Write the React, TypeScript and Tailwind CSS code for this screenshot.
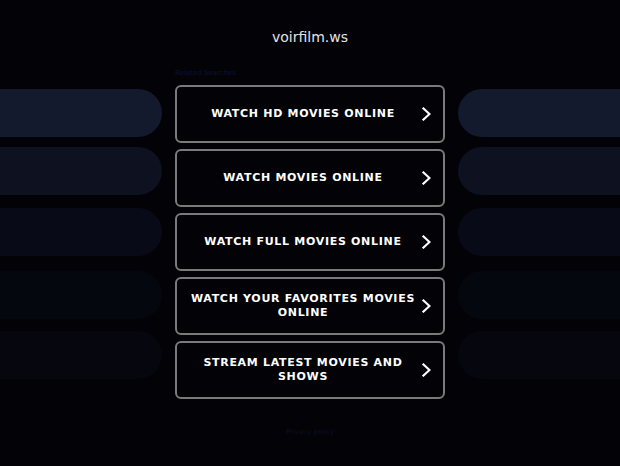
import React from "react";

const links = [
  "WATCH HD MOVIES ONLINE",
  "WATCH MOVIES ONLINE",
  "WATCH FULL MOVIES ONLINE",
  "WATCH YOUR FAVORITES MOVIES ONLINE",
  "STREAM LATEST MOVIES AND SHOWS",
];

const bars = [
  { bg: "bg-[#131a2d]", mt: "mt-0" },
  { bg: "bg-[#0d1120]", mt: "mt-[10px]" },
  { bg: "bg-[#080b17]", mt: "mt-[13px]" },
  { bg: "bg-[#05070f]", mt: "mt-[15px]" },
  { bg: "bg-[#05060e]", mt: "mt-[12px]" },
];

function Chevron() {
  return (
    <svg width="10" height="14" viewBox="0 0 10 14" fill="none" className="shrink-0">
      <path d="M2.5 1.5 L8.5 7 L2.5 12.5" stroke="#ffffff" strokeWidth="2.2" strokeLinecap="square" />
    </svg>
  );
}

export default function App() {
  return (
    <div
      className="w-[620px] h-[466px] bg-[#030307] overflow-hidden flex flex-col"
      style={{ fontFamily: '"DejaVu Sans", Verdana, sans-serif' }}
    >
      {/* Domain title */}
      <div className="pt-[27px] text-center text-[14px] leading-[20px] text-[#e2e2e6]">
        voirfilm.ws
      </div>

      <div className="mt-[22px] flex items-start">
        {/* Left decorative bars */}
        <div className="w-[162px] pt-[20px] flex flex-col">
          {bars.map((b, i) => (
            <div key={i} className={`h-[48px] rounded-r-full ${b.bg} ${b.mt}`} />
          ))}
        </div>

        {/* Center */}
        <div className="ml-[13px] w-[270px] flex flex-col">
          <div className="text-[7px] leading-[9px] text-[#0c1130] mb-[7px]">Related Searches</div>
          <div className="flex flex-col gap-[6px]">
            {links.map((t) => (
              <a
                key={t}
                href="#"
                className="h-[58px] flex items-center border-2 border-[#7a7a7a] rounded-[6px] pl-[11px] pr-[12px]"
              >
                <span className="flex-1 text-center text-white font-bold text-[11px] leading-[14px] tracking-[0.7px]">
                  {t}
                </span>
                <span className="ml-[3px]">
                  <Chevron />
                </span>
              </a>
            ))}
          </div>
          <div className="mt-[29px] text-center text-[7px] leading-[9px] text-[#0e0e24]">Privacy policy</div>
        </div>

        {/* Right decorative bars */}
        <div className="ml-[13px] flex-1 pt-[20px] flex flex-col">
          {bars.map((b, i) => (
            <div key={i} className={`h-[48px] rounded-l-full ${b.bg} ${b.mt}`} />
          ))}
        </div>
      </div>
    </div>
  );
}
